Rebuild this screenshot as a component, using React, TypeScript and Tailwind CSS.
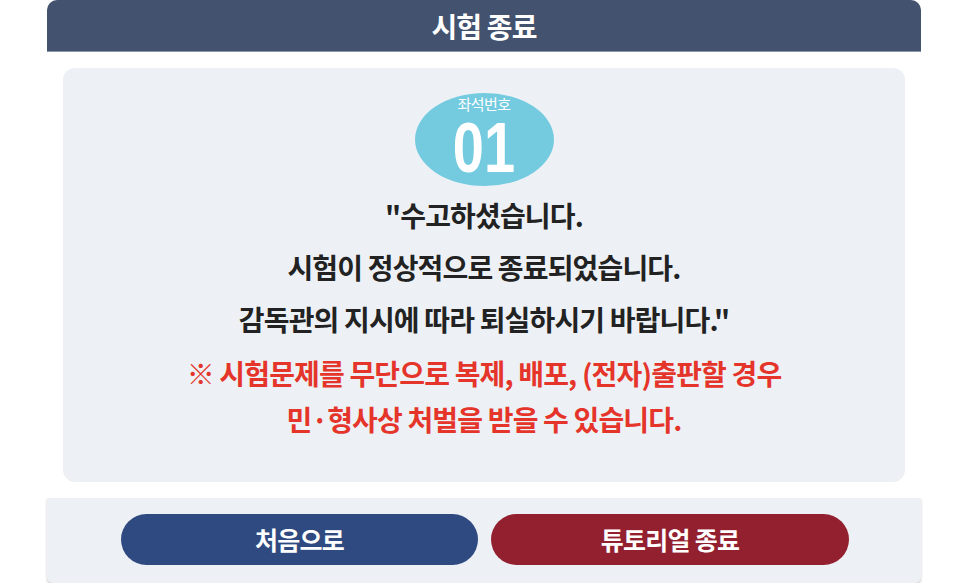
import React from "react";

export default function App() {
  const font = { fontFamily: '"Noto Sans CJK KR", "Noto Sans", sans-serif' };
  return (
    <div className="w-[966px] h-[583px] bg-white overflow-hidden" style={font}>
      <div className="ml-[47px] w-[874px] flex flex-col">
        <div className="h-[52px] rounded-t-[10px] bg-[#43536f] flex items-center justify-center border-b border-[#8a95a8]">
          <span className="text-white text-[28px] font-bold tracking-[-0.03em] leading-none">시험 종료</span>
        </div>
        <div className="mt-[16px] mx-[16px] h-[414px] rounded-[12px] bg-[#edf1f6] flex flex-col items-center pt-[25px]">
          <div className="w-[139px] h-[93px] rounded-[50%] bg-[#74cbe0] flex flex-col items-center text-white">
            <span className="mt-[3px] text-[15px] leading-[16px] tracking-[-0.04em]">좌석번호</span>
            <span
              className="mt-[8px] text-[70px] font-bold leading-[56px] scale-x-[0.8]"
              style={{ fontFamily: '"Liberation Sans", Arial, sans-serif' }}
            >
              01
            </span>
          </div>
          <div className="mt-[3px] text-center text-[#222] text-[28px] font-bold leading-[52px] tracking-[-0.03em]">
            <p>"수고하셨습니다.</p>
            <p>시험이 정상적으로 종료되었습니다.</p>
            <p>감독관의 지시에 따라 퇴실하시기 바랍니다."</p>
          </div>
          <div className="mt-[5px] text-center text-[#e5352b] text-[28px] font-bold leading-[46px] tracking-[-0.03em]">
            <p>※ 시험문제를 무단으로 복제, 배포, (전자)출판할 경우</p>
            <p>민·형사상 처벌을 받을 수 있습니다.</p>
          </div>
        </div>
        <div className="mt-[16px] h-[85px] bg-[#edf0f5] rounded-b-[6px] shadow-[0_2px_3px_rgba(0,0,0,0.2)] flex gap-[13px] pl-[74px] pt-[16px]">
          <button className="w-[357px] h-[51px] rounded-full bg-[#2f4a80] text-white text-[25px] font-bold tracking-[-0.03em] flex items-center justify-center">
            처음으로
          </button>
          <button className="w-[358px] h-[51px] rounded-full bg-[#93202f] text-white text-[25px] font-bold tracking-[-0.03em] flex items-center justify-center">
            튜토리얼 종료
          </button>
        </div>
      </div>
    </div>
  );
}
